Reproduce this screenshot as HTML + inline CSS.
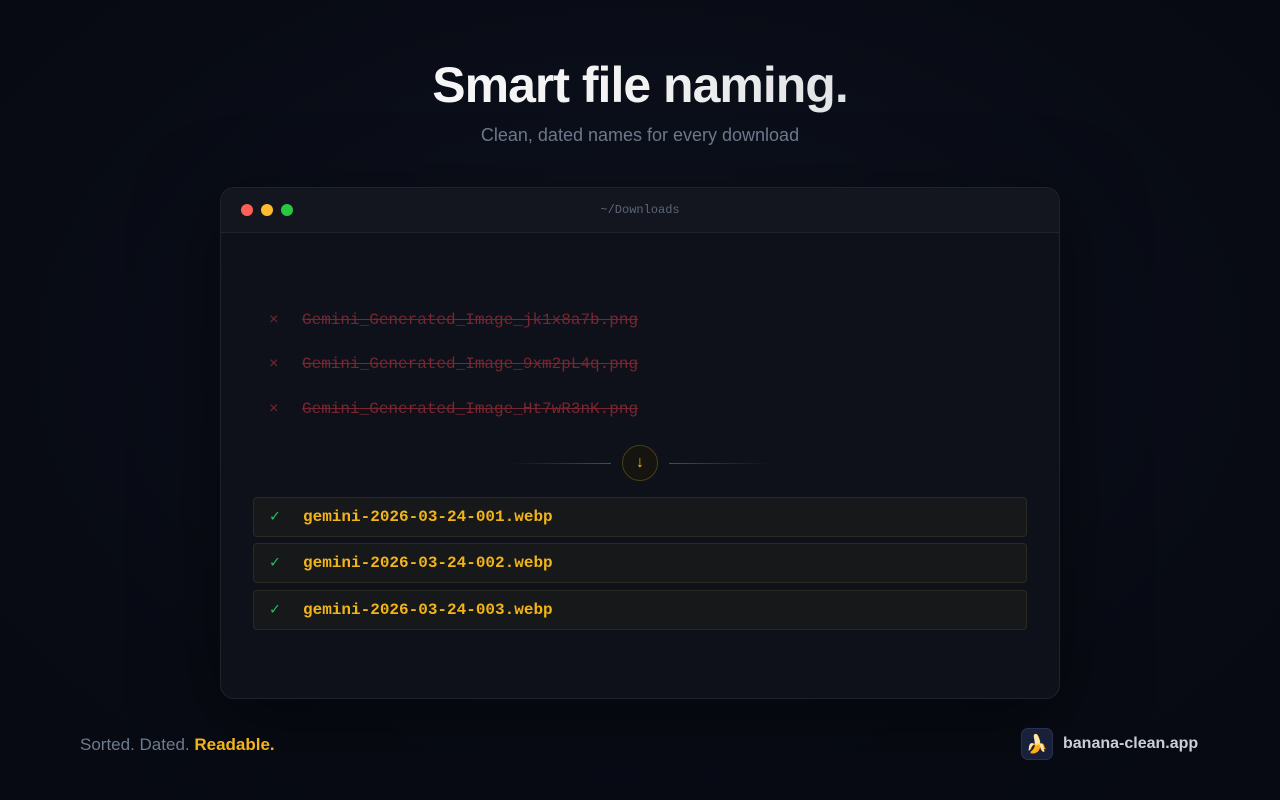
<!DOCTYPE html>
<html><head><meta charset="utf-8"><style>
*{margin:0;padding:0;box-sizing:border-box}
body{width:1280px;height:800px;overflow:hidden;background:radial-gradient(ellipse at 50% 45%,#0f1320 0%,#080b14 70%,#070a12 100%);font-family:"Liberation Sans",sans-serif;position:relative}
h1{position:absolute;top:56px;left:0;width:1280px;text-align:center;font-size:50px;font-weight:700;letter-spacing:-1px;background:linear-gradient(90deg,#ffffff 0%,#f2f2f2 50%,#bfc3cc 100%);-webkit-background-clip:text;background-clip:text;color:transparent}
.sub{position:absolute;top:125px;width:1280px;text-align:center;color:#6f7a8e;font-size:18px}
.win{position:absolute;left:220px;top:187px;width:840px;height:512px;background:#0e1119;border:1px solid #1f232d;border-radius:14px;box-shadow:0 20px 80px rgba(0,0,0,.5);overflow:hidden}
.bar{height:45px;background:#13161f;border-bottom:1px solid #1f232d;position:relative}
.dot{position:absolute;top:16px;width:12px;height:12px;border-radius:50%}
.bar .t{position:absolute;width:100%;text-align:center;top:15px;font:12px "Liberation Mono",monospace;color:#5c6577}
.old{position:absolute;left:48px;font:16px "Liberation Mono",monospace;color:#7a2530;text-decoration:line-through}
.old span{display:inline-block;width:33px;font-size:16px}
.arrow{position:absolute;left:401px;top:257px;width:36px;height:36px;border-radius:50%;border:1px solid #4a3d17;background:#15140f;color:#f2b418;text-align:center;line-height:34px;font-size:16px}
.ln{position:absolute;top:275px;height:1px;width:100px}
.row{position:absolute;left:32px;width:774px;height:40px;background:#16181a;border:1px solid #2a2a22;border-radius:4px;font:bold 16px "Liberation Mono",monospace;color:#f2b418;line-height:38px;padding-left:16px}
.row span{color:#22c55e;display:inline-block;width:33px;font-weight:normal}
.foot{position:absolute;top:735px;left:80px;font-size:17px;color:#6f7a8e}
.foot b{color:#f2b418}
.badge{position:absolute;left:1021px;top:728px;width:32px;height:32px;border-radius:7px;background:#19203a;border:1px solid #2a3150;text-align:center;line-height:30px;font-size:18px}
.brand{position:absolute;left:1063px;top:735px;color:#c9ced8;font-weight:700;font-size:16px}
</style></head><body>
<h1>Smart file naming.</h1>
<div class="sub">Clean, dated names for every download</div>
<div class="win">
<div class="bar"><div class="dot" style="left:20px;background:#ff5f57"></div><div class="dot" style="left:40px;background:#febc2e"></div><div class="dot" style="left:60px;background:#28c840"></div><div class="t">~/Downloads</div></div>
<div class="old" style="top:123px"><span>×</span>Gemini_Generated_Image_jk1x8a7b.png</div>
<div class="old" style="top:167px"><span>×</span>Gemini_Generated_Image_9xm2pL4q.png</div>
<div class="old" style="top:212px"><span>×</span>Gemini_Generated_Image_Ht7wR3nK.png</div>
<div class="ln" style="left:290px;background:linear-gradient(90deg,transparent,#5a4c22)"></div>
<div class="ln" style="left:448px;background:linear-gradient(90deg,#5a4c22,transparent)"></div>
<div class="arrow">↓</div>
<div class="row" style="top:309px"><span>✓</span>gemini-2026-03-24-001.webp</div>
<div class="row" style="top:355px"><span>✓</span>gemini-2026-03-24-002.webp</div>
<div class="row" style="top:402px"><span>✓</span>gemini-2026-03-24-003.webp</div>
</div>
<div class="foot">Sorted. Dated. <b>Readable.</b></div>
<div class="badge">🍌</div>
<div class="brand">banana-clean.app</div>
</body></html>
